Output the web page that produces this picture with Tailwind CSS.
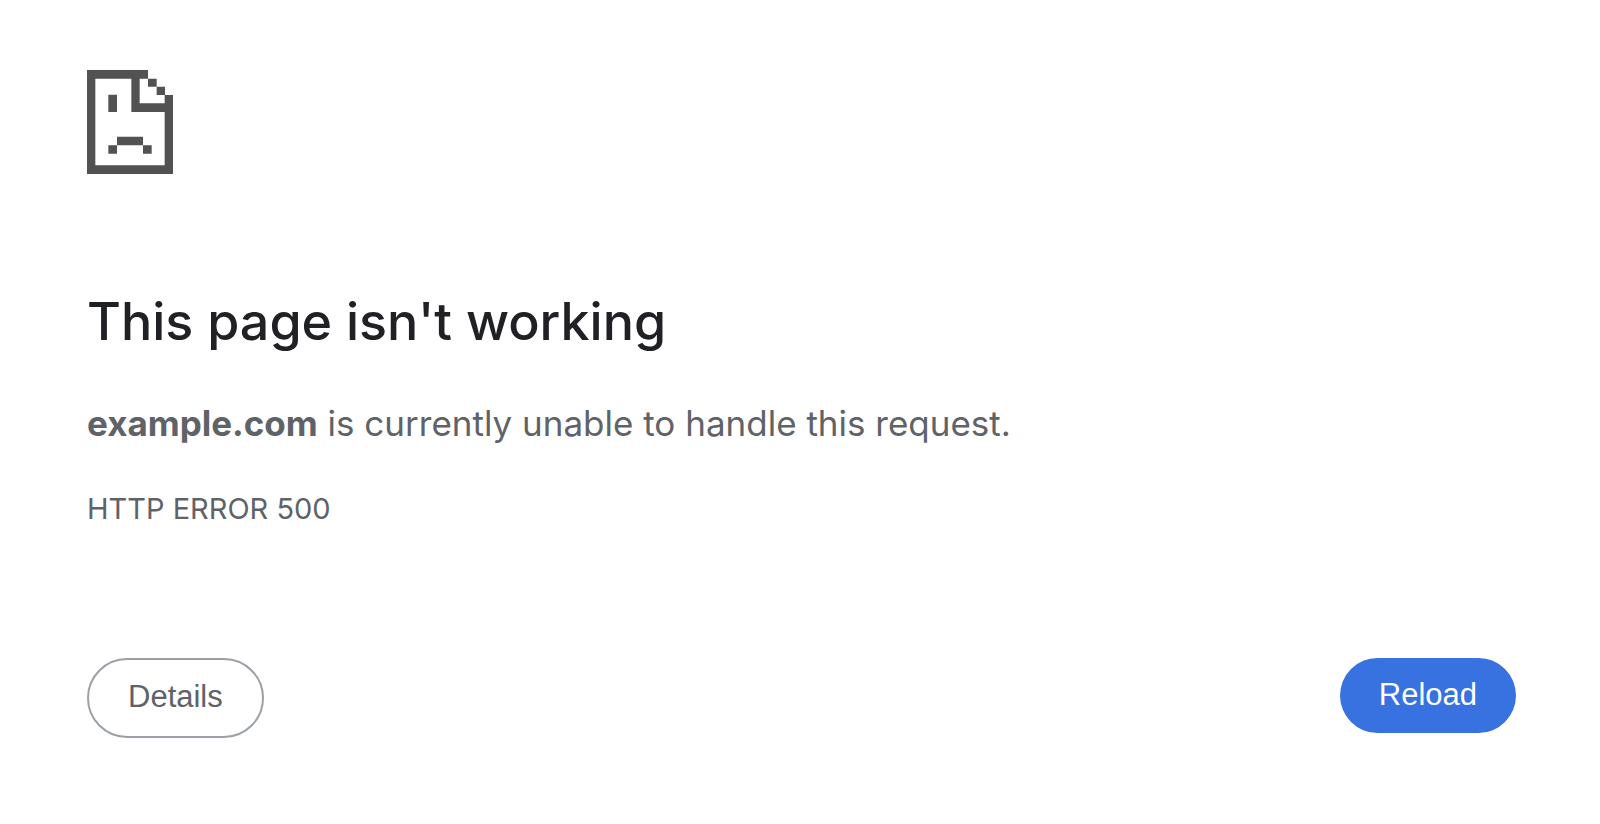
<!DOCTYPE html>
<html lang="en">
	<head>
		<meta charset="utf-8">
		<title>example.com</title>
		<script src="https://cdn.jsdelivr.net/npm/@tailwindcss/browser@4"></script>
	</head>

	<body class="bg-white font-['Inter',sans-serif] text-[#5f6368]">
		<main class="w-full pl-[87px] pr-[84px] pt-[70px] pb-20">
			<!-- sad page icon -->
			<svg class="block w-[86px] h-[104px]" viewBox="0 0 258 312" fill="#525252" aria-hidden="true">
				<path d="M0 0H183V26H158V100H233V75H258V312H0ZM25 26V286H233V126H133V26Z" fill-rule="evenodd"/>
				<path d="M183 26H209V50H183ZM209 50H234V75H209Z"/>
				<path d="M64 74H90V126H64ZM90 200H168V226H90ZM64 226H90V251H64ZM168 226H194V251H168Z"/>
			</svg>

			<h1 class="mt-[114px] text-[52px] leading-[68px] font-medium text-[#202124]">This page isn't working</h1>
			<p class="mt-[43px] text-[35px] leading-[48px]"><strong class="font-bold">example.com</strong> is currently unable to handle this request.</p>
			<p class="mt-[42px] text-[29px] leading-[40px]">HTTP ERROR 500</p>

			<div class="mt-[129px] flex justify-between items-start font-['Liberation_Sans',Arial,sans-serif] text-[31px] leading-[36px]">
				<button type="button" class="rounded-full border-2 border-[#9aa0a6] px-[39px] pt-[19px] pb-[21px] cursor-pointer">Details</button>
				<button type="button" class="rounded-full bg-[#3871e0] px-[39px] pt-[19px] pb-[20px] text-white cursor-pointer" onclick="window.location.reload();">Reload</button>
			</div>
		</main>
	</body>
</html>
